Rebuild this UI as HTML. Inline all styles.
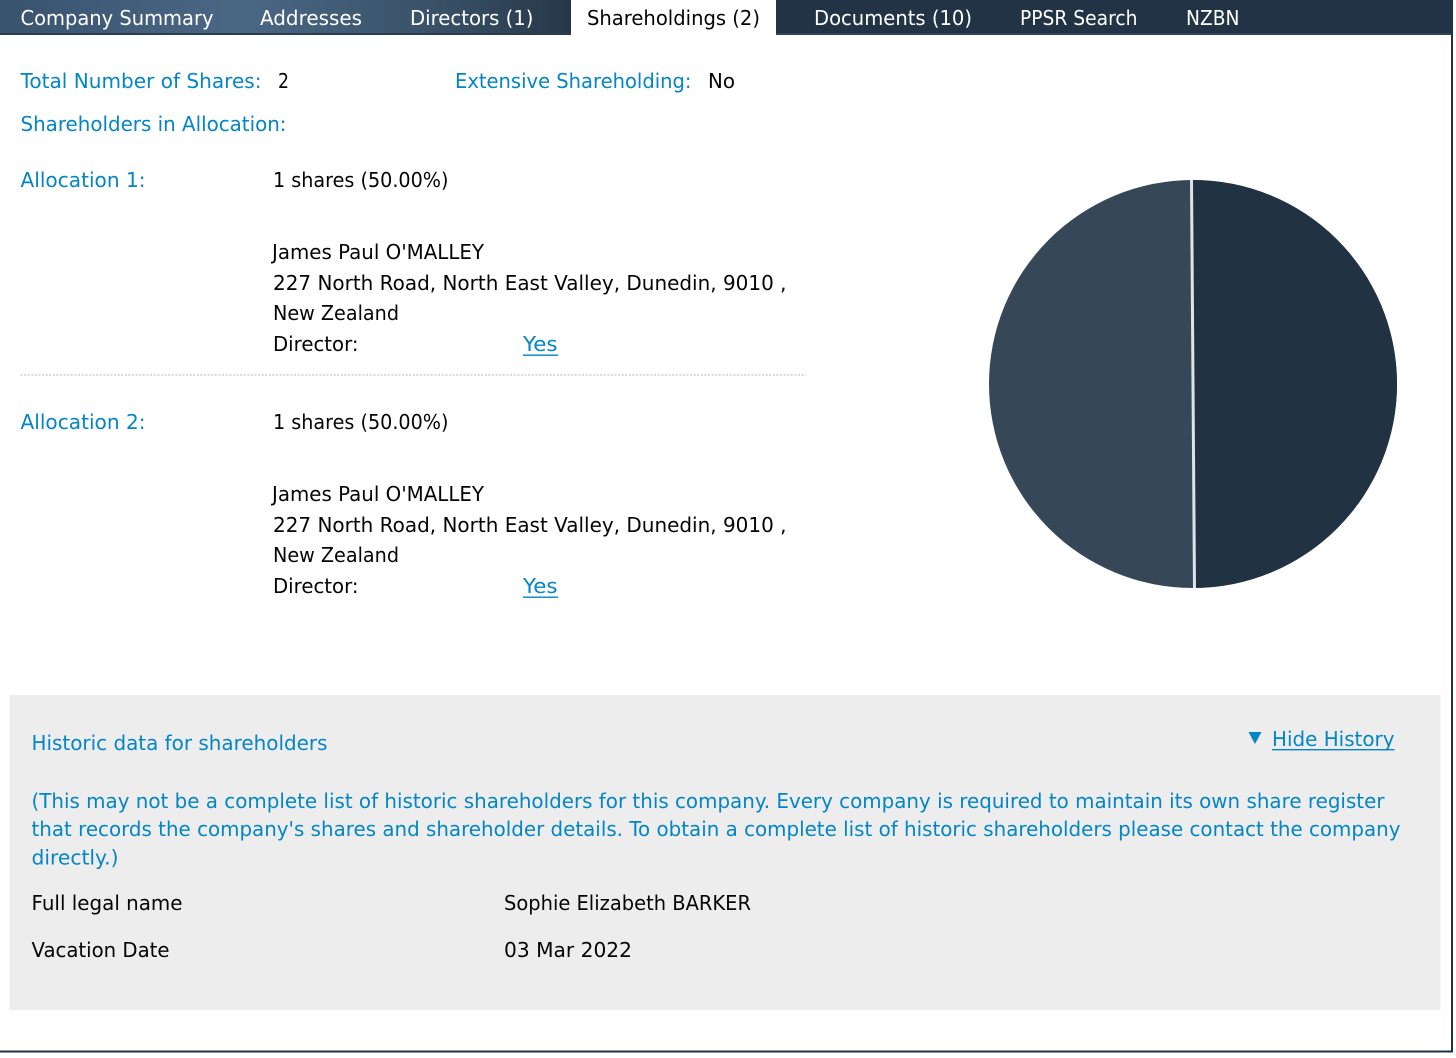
<!DOCTYPE html>
<html lang="en">
<head>
<meta charset="utf-8">
<title>Shareholdings</title>
<style>
html,body{margin:0;padding:0;background:#fff;width:1456px;height:1058px;overflow:hidden}
svg{display:block}
text{font-family:"DejaVu Sans","Liberation Sans",sans-serif;font-size:20.5px;fill:#0a0a0a}
.w{fill:#fff}
.b{fill:#0385c6}
.k{fill:#050505}
</style>
</head>
<body>
<svg width="1456" height="1058" viewBox="0 0 1456 1058" xmlns="http://www.w3.org/2000/svg">
<defs>
<linearGradient id="g" x1="0" x2="1" y1="0" y2="0">
<stop offset="0" stop-color="#38536e"/>
<stop offset="0.42" stop-color="#4a6785"/>
<stop offset="0.75" stop-color="#3a5269"/>
<stop offset="1" stop-color="#263848"/>
</linearGradient>
</defs>
<rect x="0" y="0" width="1456" height="1058" fill="#fff"/>
<rect x="0" y="0" width="571" height="34" fill="url(#g)"/>
<rect x="776" y="0" width="676" height="34" fill="#213344"/>
<rect x="0" y="33" width="571" height="2" fill="#2a3c4e"/>
<rect x="776" y="33" width="676" height="2" fill="#2f4458"/>
<rect x="1451" y="0" width="2" height="1052" fill="#203243"/>
<rect x="0" y="1050.5" width="1453" height="2" fill="#203243"/>

<text class="w" x="20.5" y="25" textLength="193" lengthAdjust="spacingAndGlyphs">Company Summary</text>
<text class="w" x="260" y="25" textLength="102" lengthAdjust="spacingAndGlyphs">Addresses</text>
<text class="w" x="410" y="25" textLength="123.5" lengthAdjust="spacingAndGlyphs">Directors (1)</text>
<text class="k" x="587" y="25" textLength="173" lengthAdjust="spacingAndGlyphs">Shareholdings (2)</text>
<text class="w" x="814" y="25" textLength="158" lengthAdjust="spacingAndGlyphs">Documents (10)</text>
<text class="w" x="1020" y="25" textLength="117.5" lengthAdjust="spacingAndGlyphs">PPSR Search</text>
<text class="w" x="1186" y="25" textLength="53.5" lengthAdjust="spacingAndGlyphs">NZBN</text>

<text class="b" x="20.5" y="88" textLength="241" lengthAdjust="spacingAndGlyphs">Total Number of Shares:</text>
<text class="k" x="278" y="88" textLength="11" lengthAdjust="spacingAndGlyphs">2</text>
<text class="b" x="455" y="88" textLength="236.5" lengthAdjust="spacingAndGlyphs">Extensive Shareholding:</text>
<text class="k" x="708" y="88" textLength="27" lengthAdjust="spacingAndGlyphs">No</text>
<text class="b" x="20.5" y="131" textLength="266" lengthAdjust="spacingAndGlyphs">Shareholders in Allocation:</text>

<text class="b" x="20.5" y="187" textLength="125" lengthAdjust="spacingAndGlyphs">Allocation 1:</text>
<text class="k" x="273" y="187" textLength="175.5" lengthAdjust="spacingAndGlyphs">1 shares (50.00%)</text>
<text class="k" x="272" y="259" textLength="212" lengthAdjust="spacingAndGlyphs">James Paul O'MALLEY</text>
<text class="k" x="273" y="290" textLength="513.5" lengthAdjust="spacingAndGlyphs">227 North Road, North East Valley, Dunedin, 9010 ,</text>
<text class="k" x="273" y="320" textLength="126" lengthAdjust="spacingAndGlyphs">New Zealand</text>
<text class="k" x="273" y="351" textLength="85.5" lengthAdjust="spacingAndGlyphs">Director:</text>
<text class="b" x="523" y="351" textLength="34.5" lengthAdjust="spacingAndGlyphs">Yes</text>
<rect x="523" y="354.5" width="35" height="1.4" fill="#0385c6"/>

<line x1="20.5" y1="375" x2="806" y2="375" stroke="#c4c4c4" stroke-width="1.2" stroke-dasharray="2 1.6"/>

<text class="b" x="20.5" y="429" textLength="125" lengthAdjust="spacingAndGlyphs">Allocation 2:</text>
<text class="k" x="273" y="429" textLength="175.5" lengthAdjust="spacingAndGlyphs">1 shares (50.00%)</text>
<text class="k" x="272" y="501" textLength="212" lengthAdjust="spacingAndGlyphs">James Paul O'MALLEY</text>
<text class="k" x="273" y="532" textLength="513.5" lengthAdjust="spacingAndGlyphs">227 North Road, North East Valley, Dunedin, 9010 ,</text>
<text class="k" x="273" y="562" textLength="126" lengthAdjust="spacingAndGlyphs">New Zealand</text>
<text class="k" x="273" y="593" textLength="85.5" lengthAdjust="spacingAndGlyphs">Director:</text>
<text class="b" x="523" y="593" textLength="34.5" lengthAdjust="spacingAndGlyphs">Yes</text>
<rect x="523" y="596.5" width="35" height="1.4" fill="#0385c6"/>

<circle cx="1193" cy="384" r="204" fill="#364858"/>
<path d="M1191.5 180 A204 204 0 0 1 1194.5 588 Z" fill="#213243"/>
<line x1="1191.5" y1="180" x2="1194.5" y2="588" stroke="#dfe3e6" stroke-width="3"/>

<rect x="9.5" y="695" width="1431" height="315" fill="#ededed"/>
<text class="b" x="31.5" y="750" textLength="296" lengthAdjust="spacingAndGlyphs">Historic data for shareholders</text>
<path d="M1248.5 732 H1261.5 L1255 744 Z" fill="#0385c6"/>
<text class="b" x="1272" y="746" textLength="122.5" lengthAdjust="spacingAndGlyphs">Hide History</text>
<rect x="1272" y="749" width="122.5" height="1.4" fill="#0385c6"/>
<text class="b" x="31.5" y="808" textLength="1353" lengthAdjust="spacingAndGlyphs">(This may not be a complete list of historic shareholders for this company. Every company is required to maintain its own share register</text>
<text class="b" x="31.5" y="836" textLength="1369" lengthAdjust="spacingAndGlyphs">that records the company's shares and shareholder details. To obtain a complete list of historic shareholders please contact the company</text>
<text class="b" x="31.5" y="864.5" textLength="87" lengthAdjust="spacingAndGlyphs">directly.)</text>
<text class="k" x="31.5" y="910" textLength="151" lengthAdjust="spacingAndGlyphs">Full legal name</text>
<text class="k" x="504" y="910" textLength="247" lengthAdjust="spacingAndGlyphs">Sophie Elizabeth BARKER</text>
<text class="k" x="31.5" y="957" textLength="138" lengthAdjust="spacingAndGlyphs">Vacation Date</text>
<text class="k" x="504" y="957" textLength="128" lengthAdjust="spacingAndGlyphs">03 Mar 2022</text>
</svg>
</body>
</html>
